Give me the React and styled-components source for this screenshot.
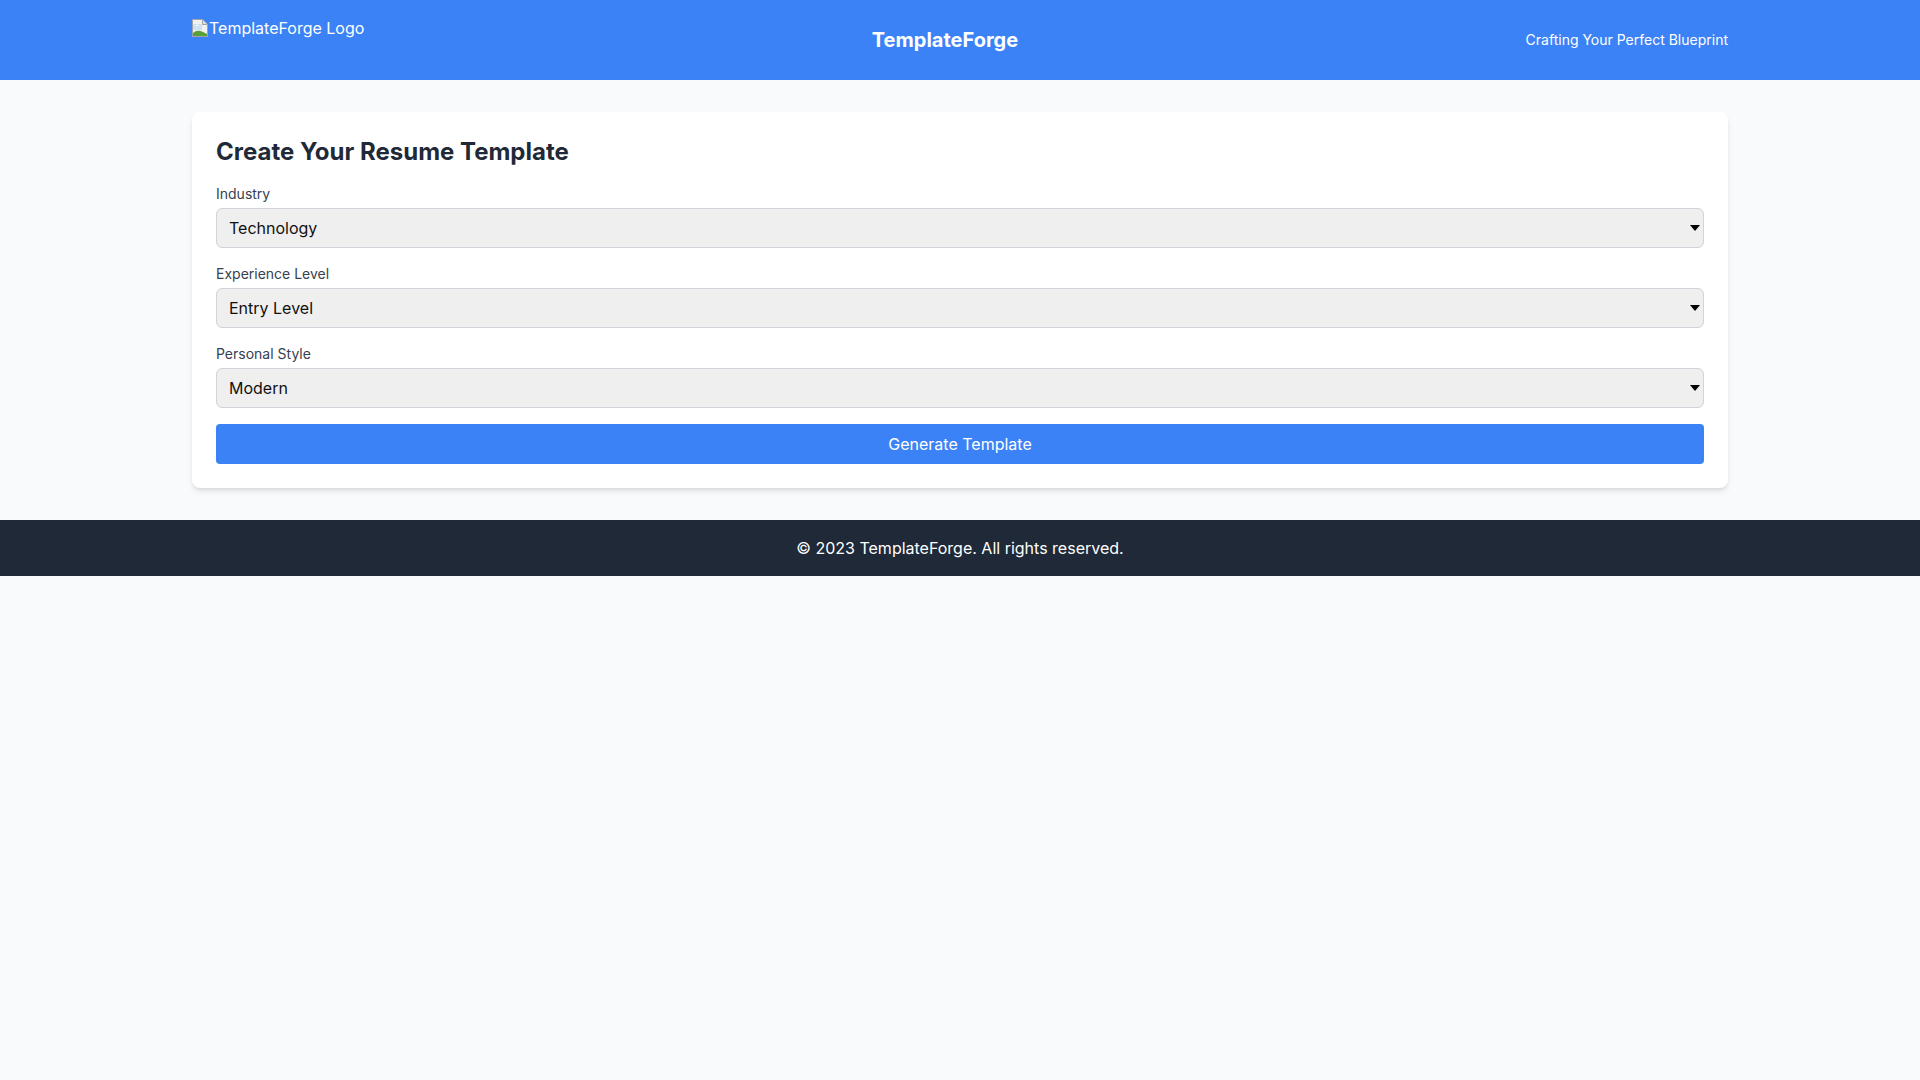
import React, { useState } from 'react';
import styled, { createGlobalStyle } from 'styled-components';

const GlobalStyle = createGlobalStyle`
  * { box-sizing: border-box; }
  body {
    margin: 0;
    background: #f9fafb;
    font-family: Inter, "Noto Sans", sans-serif;
    color: #1f2937;
    line-height: 1.5;
  }
`;

const Header = styled.header`
  background: #3b82f6;
  color: #fff;
  padding: 16px 0;
`;

const Container = styled.div`
  max-width: 1536px;
  margin: 0 auto;
`;

const HeaderRow = styled(Container)`
  display: flex;
  align-items: center;
  justify-content: space-between;
`;

const LogoBox = styled.div`
  height: 48px;
  display: flex;
  align-items: flex-start;
  font-size: 16px;
  line-height: 24px;
  svg {
    margin-top: 3px;
    margin-right: 1px;
    flex-shrink: 0;
  }
`;

const Title = styled.h1`
  margin: 0;
  font-size: 20px;
  line-height: 28px;
  font-weight: 700;
`;

const Tagline = styled.p`
  margin: 0;
  font-size: 14px;
  line-height: 20px;
`;

const Main = styled.main`
  padding: 32px 0;
`;

const Card = styled.div`
  background: #fff;
  border-radius: 8px;
  box-shadow: 0 4px 6px -1px rgba(0, 0, 0, 0.1), 0 2px 4px -2px rgba(0, 0, 0, 0.1);
  padding: 24px;
`;

const Heading = styled.h2`
  margin: 0 0 16px;
  font-size: 24px;
  line-height: 32px;
  font-weight: 700;
  color: #1f2937;
`;

const Field = styled.div`
  margin-bottom: 16px;
`;

const Label = styled.label`
  display: block;
  margin-bottom: 4px;
  font-size: 14px;
  line-height: 20px;
  font-weight: 400;
  color: #374151;
`;

const SelectWrap = styled.div`
  position: relative;
`;

const Select = styled.select`
  appearance: none;
  -webkit-appearance: none;
  width: 100%;
  height: 40px;
  padding: 0 24px 0 12px;
  font-family: Inter, "Noto Sans", sans-serif;
  font-size: 16px;
  color: #111;
  background-color: #efefef;
  border: 1px solid #d1d5db;
  border-radius: 6px;
`;

const Arrow = styled.span`
  position: absolute;
  right: 4px;
  top: 50%;
  margin-top: -3px;
  width: 0;
  height: 0;
  border-left: 5px solid transparent;
  border-right: 5px solid transparent;
  border-top: 6px solid #000;
  pointer-events: none;
`;

const Button = styled.button`
  width: 100%;
  height: 40px;
  background: #3b82f6;
  color: #fff;
  border: none;
  border-radius: 4px;
  font-family: Inter, "Noto Sans", sans-serif;
  font-size: 16px;
  cursor: pointer;
`;

const Footer = styled.footer`
  background: #1f2937;
  color: #fff;
  text-align: center;
  padding: 16px 0;
  font-size: 16px;
  line-height: 24px;
`;

const BrokenImage = () => (
  <svg width="16" height="18" viewBox="0 0 16 18">
    <path d="M0.5 0.5h10l5 5v12H0.5z" fill="#f1f1f1" stroke="#a0a4a8" strokeWidth="1" />
    <path d="M10.5 0.5v5h5" fill="#dcdcdc" stroke="#a0a4a8" strokeWidth="1" />
    <path d="M1 5h9v6H1z" fill="#cfe0f3" />
    <path d="M3 7 q2 -2 4 0 z" fill="#fff" />
    <path d="M1 17 L1 14 Q5 10 11 13 L15 15 L15 17 Z" fill="#58a03a" />
  </svg>
);

const fields = [
  { label: 'Industry', options: ['Technology', 'Finance', 'Healthcare', 'Education'] },
  { label: 'Experience Level', options: ['Entry Level', 'Mid Level', 'Senior Level'] },
  { label: 'Personal Style', options: ['Modern', 'Classic', 'Creative'] },
];

const App = () => {
  const [values, setValues] = useState(fields.map((f) => f.options[0]));

  return (
    <>
      <GlobalStyle />
      <Header>
        <HeaderRow>
          <LogoBox>
            <BrokenImage />
            <span>TemplateForge Logo</span>
          </LogoBox>
          <Title>TemplateForge</Title>
          <Tagline>Crafting Your Perfect Blueprint</Tagline>
        </HeaderRow>
      </Header>
      <Main>
        <Container>
          <Card>
            <Heading>Create Your Resume Template</Heading>
            {fields.map((f, i) => (
              <Field key={f.label}>
                <Label>{f.label}</Label>
                <SelectWrap>
                  <Select
                    value={values[i]}
                    onChange={(e) => {
                      const next = [...values];
                      next[i] = e.target.value;
                      setValues(next);
                    }}
                  >
                    {f.options.map((o) => (
                      <option key={o}>{o}</option>
                    ))}
                  </Select>
                  <Arrow />
                </SelectWrap>
              </Field>
            ))}
            <Button>Generate Template</Button>
          </Card>
        </Container>
      </Main>
      <Footer>© 2023 TemplateForge. All rights reserved.</Footer>
    </>
  );
};

export default App;
